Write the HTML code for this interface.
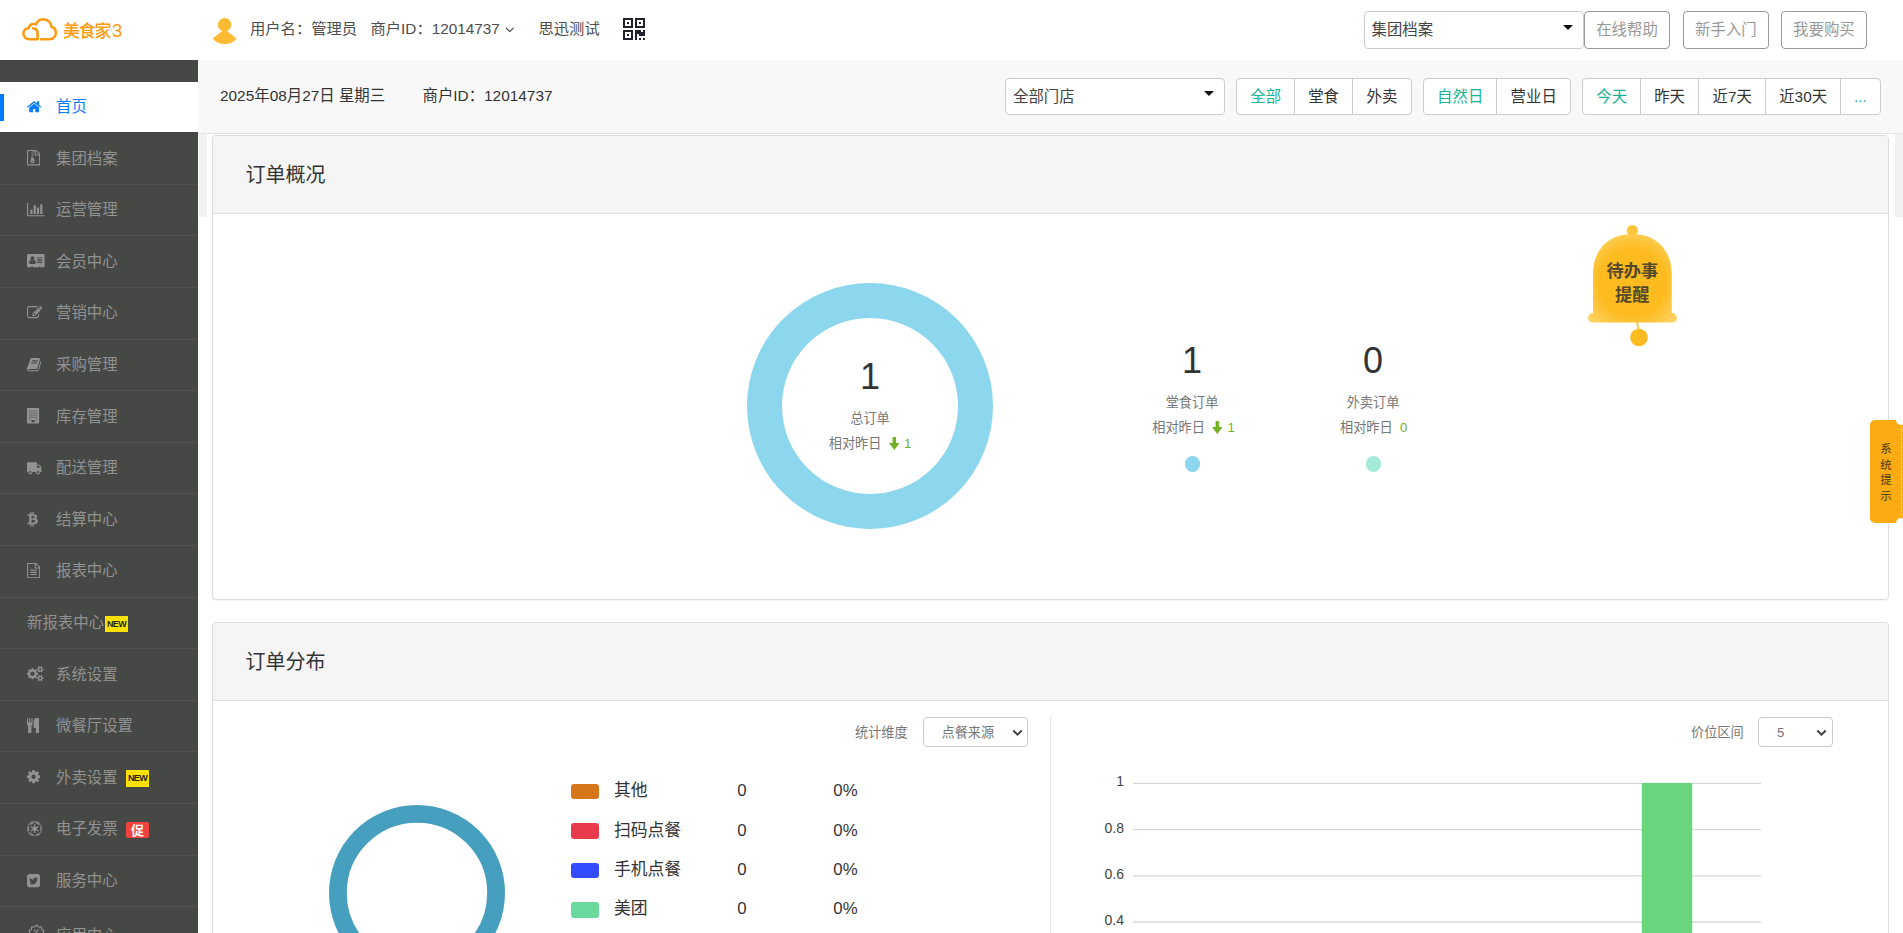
<!DOCTYPE html>
<html lang="zh-CN">
<head>
<meta charset="utf-8">
<title>美食家3</title>
<style>
html,body{margin:0;padding:0;}
body{width:1903px;height:933px;overflow:hidden;background:#fff;position:relative;font-family:"Liberation Sans","Noto Sans CJK SC",sans-serif;color:#333;font-size:15.4px;}
*{box-sizing:border-box;}
.abs{position:absolute;}
svg.fa{display:block;}
/* header */
#hdr{position:absolute;left:0;top:0;width:1903px;height:60px;background:#fff;}
#logo-t{position:absolute;left:63px;top:17.5px;font-size:17px;line-height:26px;color:#ff9a0e;letter-spacing:-1.2px;font-weight:500;white-space:nowrap;}
#logo-t b{font-weight:normal;font-size:18.5px;letter-spacing:0;margin-left:1.5px;}
.ht{position:absolute;top:16px;line-height:26px;font-size:15.3px;color:#4d4d4d;white-space:nowrap;}
.sel{position:absolute;border:1px solid #ccc;border-radius:4px;background:#fff;font-size:15.4px;color:#333;white-space:nowrap;}
.sel .tri{position:absolute;width:0;height:0;border-left:5px solid transparent;border-right:5px solid transparent;border-top:5.5px solid #111;}
.hb{position:absolute;top:11px;height:37.5px;width:85.4px;border:1px solid #999;border-radius:4px;color:#999;font-size:15.4px;line-height:36.8px;text-align:center;background:#fff;white-space:nowrap;}
/* sidebar */
#side{position:absolute;left:0;top:60px;width:198px;height:873px;background:#464845;overflow:hidden;}
#side ul{list-style:none;margin:0;padding:0;position:absolute;left:0;top:22px;width:198px;}
#side li{position:relative;height:51.6px;border-bottom:1px solid #525350;color:#929292;font-size:15.4px;line-height:50.6px;white-space:nowrap;}
#side li.act{height:50px;background:#fff;color:#0a7cff;border-bottom:none;line-height:50px;margin-bottom:1.2px;}
#side li.act:before{content:"";position:absolute;left:0;top:12px;width:4px;height:27px;background:#007bff;}
#side .ico{position:absolute;left:27px;top:17px;width:20px;height:16px;}
#side .lb{position:absolute;left:56px;top:0.5px;}
#side li.noico .lb{left:27px;}
.bnew{position:absolute;left:126px;top:17.6px;height:17.5px;width:23px;background:#ffe100;color:#222;font-size:9px;font-weight:bold;line-height:17.5px;text-align:center;letter-spacing:-0.7px;}
.bnew.b0{left:105px;top:18.6px;height:16px;line-height:16px;}
.bcu{position:absolute;left:126px;top:18px;height:16px;width:23px;background:#f0433d;color:#fff;font-size:13px;font-weight:bold;line-height:17px;text-align:center;border-radius:2px;}
/* filter bar */
#fbar{position:absolute;left:198px;top:60px;width:1705px;height:73.5px;background:#f8f8f8;border-bottom:1px solid #e4e4e4;}
.ft{position:absolute;top:23px;line-height:26px;font-size:15.4px;color:#333;white-space:nowrap;}
.bg{position:absolute;top:18px;height:36.6px;display:flex;border:1px solid #ccc;border-radius:4px;background:#fff;overflow:hidden;}
.bg span{display:block;height:100%;line-height:36px;text-align:center;font-size:15.4px;color:#333;border-left:1px solid #ccc;white-space:nowrap;}
.bg span:first-child{border-left:none;}
.bg span.on{color:#1ab394;}
/* cards */
.strip{position:absolute;top:133.5px;height:83px;background:#f1f1f1;}
.card{position:absolute;left:212px;width:1677px;border:1px solid #ddd;border-radius:4px;background:#fff;box-shadow:0 1px 1px rgba(0,0,0,.05);}
.card .hd{height:78px;background:#f5f5f5;border-bottom:1px solid #ddd;border-radius:3px 3px 0 0;}
.card .hd span{position:absolute;left:32.5px;top:25px;font-size:20px;line-height:28px;color:#333;white-space:nowrap;}
.c{position:absolute;text-align:center;white-space:nowrap;}
.g{color:#777;font-size:13.2px;}
.gr{color:#72b226;margin-right:-3px;}
.lg{font-size:16.8px;line-height:26px;color:#333;white-space:nowrap;}
</style>
</head>
<body>
<div id="hdr">
  <svg class="abs" style="left:20px;top:15px" width="40" height="28" viewBox="0 0 40 28"><path d="M17.5 24.2 H9.6 C5.9 24.2 3.4 21.8 3.4 18.6 C3.4 15.6 5.6 13.4 8.6 13.2 C9.2 10.6 11.2 9 13.8 9 C14.6 9 15.3 9.1 15.9 9.4 C17.2 6.2 20 4.2 23.4 4.2 C27.8 4.2 31.2 7.5 31.4 11.8 C34.2 12.6 35.9 14.9 35.9 17.8 C35.9 21.4 33.2 24.2 29.4 24.2 H21.2" fill="none" stroke="#ff9a0e" stroke-width="2.6" stroke-linecap="round" stroke-linejoin="round"/><path d="M13.2 13.4 C15.8 13.6 17.6 15.6 17.6 18.4 V24" fill="none" stroke="#ff9a0e" stroke-width="2.6" stroke-linecap="round"/></svg>
  <div id="logo-t">美食家<b>3</b></div>
  <svg class="abs" style="left:211px;top:17px" width="28" height="28" viewBox="0 0 28 28"><circle cx="13.6" cy="7.8" r="6.8" fill="#fdbb33"/><path d="M13.6 12.2 L25.6 21.4 C22.6 25.2 18.4 27 13.6 27 C8.8 27 4.6 25.2 1.6 21.4 Z" fill="#fdbb33"/></svg>
  <div class="ht" style="left:250px">用户名：管理员</div>
  <div class="ht" style="left:370.5px">商户ID：12014737</div>
  <div class="abs" style="left:505px;top:21.8px;color:#4d4d4d"><svg class="fa" width="9.643" height="15" viewBox="0 -1536 1152 1792" style=""><path transform="scale(1,-1)" fill="currentColor" d="M1075 800q0 -13 -10 -23l-466 -466q-10 -10 -23 -10t-23 10l-466 466q-10 10 -10 23t10 23l50 50q10 10 23 10t23 -10l393 -393l393 393q10 10 23 10t23 -10l50 -50q10 -10 10 -23z"/></svg></div>
  <div class="ht" style="left:538.5px">思迅测试</div>
  <div class="abs" style="left:623.3px;top:16.4px;color:#22222f"><svg class="fa" width="22.000" height="28" viewBox="0 -1536 1408 1792" style=""><path transform="scale(1,-1)" fill="currentColor" d="M384 384v-128h-128v128h128zM384 1152v-128h-128v128h128zM1152 1152v-128h-128v128h128zM128 129h384v383h-384v-383zM128 896h384v384h-384v-384zM896 896h384v384h-384v-384zM640 640v-640h-640v640h640zM1152 128v-128h-128v128h128zM1408 128v-128h-128v128h128z
M1408 640v-384h-384v128h-128v-384h-128v640h384v-128h128v128h128zM640 1408v-640h-640v640h640zM1408 1408v-640h-640v640h640z"/></svg></div>
  <div class="sel" style="left:1364px;top:11px;width:220px;height:37.5px;line-height:36.5px;padding-left:6.5px;color:#444">集团档案<i class="tri" style="left:198.2px;top:12.8px"></i></div>
  <div class="hb" style="left:1584.3px">在线帮助</div>
  <div class="hb" style="left:1683.2px">新手入门</div>
  <div class="hb" style="left:1781.2px">我要购买</div>
</div>
<div id="side">
<ul>
<li class="mi act"><span class="ico"><svg class="fa" width="14.300" height="15.4" viewBox="0 -1536 1664 1792" style=""><path transform="scale(1,-1)" fill="currentColor" d="M1408 544v-480q0 -26 -19 -45t-45 -19h-384v384h-256v-384h-384q-26 0 -45 19t-19 45v480q0 1 0.5 3t0.5 3l575 474l575 -474q1 -2 1 -6zM1631 613l-62 -74q-8 -9 -21 -11h-3q-13 0 -21 7l-692 577l-692 -577q-12 -8 -24 -7q-13 2 -21 11l-62 74q-8 10 -7 23.5t11 21.5
l719 599q32 26 76 26t76 -26l244 -204v195q0 14 9 23t23 9h192q14 0 23 -9t9 -23v-408l219 -182q10 -8 11 -21.5t-7 -23.5z"/></svg></span><span class="lb" style="top:-0.3px">首页</span></li>
<li class="mi"><span class="ico"><svg class="fa" width="13.200" height="15.4" viewBox="0 -1536 1536 1792" style=""><path transform="scale(1,-1)" fill="currentColor" d="M640 1152v128h-128v-128h128zM768 1024v128h-128v-128h128zM640 896v128h-128v-128h128zM768 768v128h-128v-128h128zM1468 1156q28 -28 48 -76t20 -88v-1152q0 -40 -28 -68t-68 -28h-1344q-40 0 -68 28t-28 68v1600q0 40 28 68t68 28h896q40 0 88 -20t76 -48zM1024 1400
v-376h376q-10 29 -22 41l-313 313q-12 12 -41 22zM1408 -128v1024h-416q-40 0 -68 28t-28 68v416h-128v-128h-128v128h-512v-1536h1280zM781 593l107 -349q8 -27 8 -52q0 -83 -72.5 -137.5t-183.5 -54.5t-183.5 54.5t-72.5 137.5q0 25 8 52q21 63 120 396v128h128v-128h79
q22 0 39 -13t23 -34zM640 128q53 0 90.5 19t37.5 45t-37.5 45t-90.5 19t-90.5 -19t-37.5 -45t37.5 -45t90.5 -19z"/></svg></span><span class="lb">集团档案</span></li>
<li class="mi"><span class="ico"><svg class="fa" width="17.600" height="15.4" viewBox="0 -1536 2048 1792" style=""><path transform="scale(1,-1)" fill="currentColor" d="M640 640v-512h-256v512h256zM1024 1152v-1024h-256v1024h256zM2048 0v-128h-2048v1536h128v-1408h1920zM1408 896v-768h-256v768h256zM1792 1280v-1152h-256v1152h256z"/></svg></span><span class="lb">运营管理</span></li>
<li class="mi"><span class="ico"><svg class="fa" width="17.600" height="15.4" viewBox="0 -1536 2048 1792" style=""><path transform="scale(1,-1)" fill="currentColor" d="M1024 405q0 64 -9 117.5t-29.5 103t-60.5 78t-97 28.5q-6 -4 -30 -18t-37.5 -21.5t-35.5 -17.5t-43 -14.5t-42 -4.5t-42 4.5t-43 14.5t-35.5 17.5t-37.5 21.5t-30 18q-57 0 -97 -28.5t-60.5 -78t-29.5 -103t-9 -117.5t37 -106.5t91 -42.5h512q54 0 91 42.5t37 106.5z
M867 925q0 94 -66.5 160.5t-160.5 66.5t-160.5 -66.5t-66.5 -160.5t66.5 -160.5t160.5 -66.5t160.5 66.5t66.5 160.5zM1792 416v64q0 14 -9 23t-23 9h-576q-14 0 -23 -9t-9 -23v-64q0 -14 9 -23t23 -9h576q14 0 23 9t9 23zM1792 676v56q0 15 -10.5 25.5t-25.5 10.5h-568
q-15 0 -25.5 -10.5t-10.5 -25.5v-56q0 -15 10.5 -25.5t25.5 -10.5h568q15 0 25.5 10.5t10.5 25.5zM1792 928v64q0 14 -9 23t-23 9h-576q-14 0 -23 -9t-9 -23v-64q0 -14 9 -23t23 -9h576q14 0 23 9t9 23zM2048 1248v-1216q0 -66 -47 -113t-113 -47h-352v96q0 14 -9 23t-23 9
h-64q-14 0 -23 -9t-9 -23v-96h-768v96q0 14 -9 23t-23 9h-64q-14 0 -23 -9t-9 -23v-96h-352q-66 0 -113 47t-47 113v1216q0 66 47 113t113 47h1728q66 0 113 -47t47 -113z"/></svg></span><span class="lb">会员中心</span></li>
<li class="mi"><span class="ico"><svg class="fa" width="15.400" height="15.4" viewBox="0 -1536 1792 1792" style=""><path transform="scale(1,-1)" fill="currentColor" d="M888 352l116 116l-152 152l-116 -116v-56h96v-96h56zM1328 1072q-16 16 -33 -1l-350 -350q-17 -17 -1 -33t33 1l350 350q17 17 1 33zM1408 478v-190q0 -119 -84.5 -203.5t-203.5 -84.5h-832q-119 0 -203.5 84.5t-84.5 203.5v832q0 119 84.5 203.5t203.5 84.5h832
q63 0 117 -25q15 -7 18 -23q3 -17 -9 -29l-49 -49q-14 -14 -32 -8q-23 6 -45 6h-832q-66 0 -113 -47t-47 -113v-832q0 -66 47 -113t113 -47h832q66 0 113 47t47 113v126q0 13 9 22l64 64q15 15 35 7t20 -29zM1312 1216l288 -288l-672 -672h-288v288zM1756 1084l-92 -92
l-288 288l92 92q28 28 68 28t68 -28l152 -152q28 -28 28 -68t-28 -68z"/></svg></span><span class="lb">营销中心</span></li>
<li class="mi"><span class="ico"><svg class="fa" width="14.300" height="15.4" viewBox="0 -1536 1664 1792" style=""><path transform="scale(1,-1)" fill="currentColor" d="M1639 1058q40 -57 18 -129l-275 -906q-19 -64 -76.5 -107.5t-122.5 -43.5h-923q-77 0 -148.5 53.5t-99.5 131.5q-24 67 -2 127q0 4 3 27t4 37q1 8 -3 21.5t-3 19.5q2 11 8 21t16.5 23.5t16.5 23.5q23 38 45 91.5t30 91.5q3 10 0.5 30t-0.5 28q3 11 17 28t17 23
q21 36 42 92t25 90q1 9 -2.5 32t0.5 28q4 13 22 30.5t22 22.5q19 26 42.5 84.5t27.5 96.5q1 8 -3 25.5t-2 26.5q2 8 9 18t18 23t17 21q8 12 16.5 30.5t15 35t16 36t19.5 32t26.5 23.5t36 11.5t47.5 -5.5l-1 -3q38 9 51 9h761q74 0 114 -56t18 -130l-274 -906
q-36 -119 -71.5 -153.5t-128.5 -34.5h-869q-27 0 -38 -15q-11 -16 -1 -43q24 -70 144 -70h923q29 0 56 15.5t35 41.5l300 987q7 22 5 57q38 -15 59 -43zM575 1056q-4 -13 2 -22.5t20 -9.5h608q13 0 25.5 9.5t16.5 22.5l21 64q4 13 -2 22.5t-20 9.5h-608q-13 0 -25.5 -9.5
t-16.5 -22.5zM492 800q-4 -13 2 -22.5t20 -9.5h608q13 0 25.5 9.5t16.5 22.5l21 64q4 13 -2 22.5t-20 9.5h-608q-13 0 -25.5 -9.5t-16.5 -22.5z"/></svg></span><span class="lb">采购管理</span></li>
<li class="mi"><span class="ico"><svg class="fa" width="13.200" height="15.4" viewBox="0 -1536 1536 1792" style=""><path transform="scale(1,-1)" fill="currentColor" d="M1344 1536q26 0 45 -19t19 -45v-1664q0 -26 -19 -45t-45 -19h-1280q-26 0 -45 19t-19 45v1664q0 26 19 45t45 19h1280zM512 1248v-64q0 -14 9 -23t23 -9h64q14 0 23 9t9 23v64q0 14 -9 23t-23 9h-64q-14 0 -23 -9t-9 -23zM512 992v-64q0 -14 9 -23t23 -9h64q14 0 23 9
t9 23v64q0 14 -9 23t-23 9h-64q-14 0 -23 -9t-9 -23zM512 736v-64q0 -14 9 -23t23 -9h64q14 0 23 9t9 23v64q0 14 -9 23t-23 9h-64q-14 0 -23 -9t-9 -23zM512 480v-64q0 -14 9 -23t23 -9h64q14 0 23 9t9 23v64q0 14 -9 23t-23 9h-64q-14 0 -23 -9t-9 -23zM384 160v64
q0 14 -9 23t-23 9h-64q-14 0 -23 -9t-9 -23v-64q0 -14 9 -23t23 -9h64q14 0 23 9t9 23zM384 416v64q0 14 -9 23t-23 9h-64q-14 0 -23 -9t-9 -23v-64q0 -14 9 -23t23 -9h64q14 0 23 9t9 23zM384 672v64q0 14 -9 23t-23 9h-64q-14 0 -23 -9t-9 -23v-64q0 -14 9 -23t23 -9h64
q14 0 23 9t9 23zM384 928v64q0 14 -9 23t-23 9h-64q-14 0 -23 -9t-9 -23v-64q0 -14 9 -23t23 -9h64q14 0 23 9t9 23zM384 1184v64q0 14 -9 23t-23 9h-64q-14 0 -23 -9t-9 -23v-64q0 -14 9 -23t23 -9h64q14 0 23 9t9 23zM896 -96v192q0 14 -9 23t-23 9h-320q-14 0 -23 -9
t-9 -23v-192q0 -14 9 -23t23 -9h320q14 0 23 9t9 23zM896 416v64q0 14 -9 23t-23 9h-64q-14 0 -23 -9t-9 -23v-64q0 -14 9 -23t23 -9h64q14 0 23 9t9 23zM896 672v64q0 14 -9 23t-23 9h-64q-14 0 -23 -9t-9 -23v-64q0 -14 9 -23t23 -9h64q14 0 23 9t9 23zM896 928v64
q0 14 -9 23t-23 9h-64q-14 0 -23 -9t-9 -23v-64q0 -14 9 -23t23 -9h64q14 0 23 9t9 23zM896 1184v64q0 14 -9 23t-23 9h-64q-14 0 -23 -9t-9 -23v-64q0 -14 9 -23t23 -9h64q14 0 23 9t9 23zM1152 160v64q0 14 -9 23t-23 9h-64q-14 0 -23 -9t-9 -23v-64q0 -14 9 -23t23 -9h64
q14 0 23 9t9 23zM1152 416v64q0 14 -9 23t-23 9h-64q-14 0 -23 -9t-9 -23v-64q0 -14 9 -23t23 -9h64q14 0 23 9t9 23zM1152 672v64q0 14 -9 23t-23 9h-64q-14 0 -23 -9t-9 -23v-64q0 -14 9 -23t23 -9h64q14 0 23 9t9 23zM1152 928v64q0 14 -9 23t-23 9h-64q-14 0 -23 -9
t-9 -23v-64q0 -14 9 -23t23 -9h64q14 0 23 9t9 23zM1152 1184v64q0 14 -9 23t-23 9h-64q-14 0 -23 -9t-9 -23v-64q0 -14 9 -23t23 -9h64q14 0 23 9t9 23z"/></svg></span><span class="lb">库存管理</span></li>
<li class="mi"><span class="ico"><svg class="fa" width="15.400" height="15.4" viewBox="0 -1536 1792 1792" style=""><path transform="translate(1792,0) scale(-1,-1)" fill="currentColor" d="M640 128q0 52 -38 90t-90 38t-90 -38t-38 -90t38 -90t90 -38t90 38t38 90zM256 640h384v256h-158q-13 0 -22 -9l-195 -195q-9 -9 -9 -22v-30zM1536 128q0 52 -38 90t-90 38t-90 -38t-38 -90t38 -90t90 -38t90 38t38 90zM1792 1216v-1024q0 -15 -4 -26.5t-13.5 -18.5
t-16.5 -11.5t-23.5 -6t-22.5 -2t-25.5 0t-22.5 0.5q0 -106 -75 -181t-181 -75t-181 75t-75 181h-384q0 -106 -75 -181t-181 -75t-181 75t-75 181h-64q-3 0 -22.5 -0.5t-25.5 0t-22.5 2t-23.5 6t-16.5 11.5t-13.5 18.5t-4 26.5q0 26 19 45t45 19v320q0 8 -0.5 35t0 38
t2.5 34.5t6.5 37t14 30.5t22.5 30l198 198q19 19 50.5 32t58.5 13h160v192q0 26 19 45t45 19h1024q26 0 45 -19t19 -45z"/></svg></span><span class="lb">配送管理</span></li>
<li class="mi"><span class="ico"><svg class="fa" width="11.000" height="15.4" viewBox="0 -1536 1280 1792" style=""><path transform="scale(1,-1)" fill="currentColor" d="M1167 896q18 -182 -131 -258q117 -28 175 -103t45 -214q-7 -71 -32.5 -125t-64.5 -89t-97 -58.5t-121.5 -34.5t-145.5 -15v-255h-154v251q-80 0 -122 1v-252h-154v255q-18 0 -54 0.5t-55 0.5h-200l31 183h111q50 0 58 51v402h16q-6 1 -16 1v287q-13 68 -89 68h-111v164
l212 -1q64 0 97 1v252h154v-247q82 2 122 2v245h154v-252q79 -7 140 -22.5t113 -45t82.5 -78t36.5 -114.5zM952 351q0 36 -15 64t-37 46t-57.5 30.5t-65.5 18.5t-74 9t-69 3t-64.5 -1t-47.5 -1v-338q8 0 37 -0.5t48 -0.5t53 1.5t58.5 4t57 8.5t55.5 14t47.5 21t39.5 30
t24.5 40t9.5 51zM881 827q0 33 -12.5 58.5t-30.5 42t-48 28t-55 16.5t-61.5 8t-58 2.5t-54 -1t-39.5 -0.5v-307q5 0 34.5 -0.5t46.5 0t50 2t55 5.5t51.5 11t48.5 18.5t37 27t27 38.5t9 51z"/></svg></span><span class="lb">结算中心</span></li>
<li class="mi"><span class="ico"><svg class="fa" width="13.200" height="15.4" viewBox="0 -1536 1536 1792" style=""><path transform="scale(1,-1)" fill="currentColor" d="M1468 1156q28 -28 48 -76t20 -88v-1152q0 -40 -28 -68t-68 -28h-1344q-40 0 -68 28t-28 68v1600q0 40 28 68t68 28h896q40 0 88 -20t76 -48zM1024 1400v-376h376q-10 29 -22 41l-313 313q-12 12 -41 22zM1408 -128v1024h-416q-40 0 -68 28t-28 68v416h-768v-1536h1280z
M384 736q0 14 9 23t23 9h704q14 0 23 -9t9 -23v-64q0 -14 -9 -23t-23 -9h-704q-14 0 -23 9t-9 23v64zM1120 512q14 0 23 -9t9 -23v-64q0 -14 -9 -23t-23 -9h-704q-14 0 -23 9t-9 23v64q0 14 9 23t23 9h704zM1120 256q14 0 23 -9t9 -23v-64q0 -14 -9 -23t-23 -9h-704
q-14 0 -23 9t-9 23v64q0 14 9 23t23 9h704z"/></svg></span><span class="lb">报表中心</span></li>
<li class="mi noico"><span class="lb">新报表中心</span><span class="bnew b0">NEW</span></li>
<li class="mi"><span class="ico"><svg class="fa" width="16.500" height="15.4" viewBox="0 -1536 1920 1792" style=""><path transform="scale(1,-1)" fill="currentColor" d="M896 640q0 106 -75 181t-181 75t-181 -75t-75 -181t75 -181t181 -75t181 75t75 181zM1664 128q0 52 -38 90t-90 38t-90 -38t-38 -90q0 -53 37.5 -90.5t90.5 -37.5t90.5 37.5t37.5 90.5zM1664 1152q0 52 -38 90t-90 38t-90 -38t-38 -90q0 -53 37.5 -90.5t90.5 -37.5
t90.5 37.5t37.5 90.5zM1280 731v-185q0 -10 -7 -19.5t-16 -10.5l-155 -24q-11 -35 -32 -76q34 -48 90 -115q7 -11 7 -20q0 -12 -7 -19q-23 -30 -82.5 -89.5t-78.5 -59.5q-11 0 -21 7l-115 90q-37 -19 -77 -31q-11 -108 -23 -155q-7 -24 -30 -24h-186q-11 0 -20 7.5t-10 17.5
l-23 153q-34 10 -75 31l-118 -89q-7 -7 -20 -7q-11 0 -21 8q-144 133 -144 160q0 9 7 19q10 14 41 53t47 61q-23 44 -35 82l-152 24q-10 1 -17 9.5t-7 19.5v185q0 10 7 19.5t16 10.5l155 24q11 35 32 76q-34 48 -90 115q-7 11 -7 20q0 12 7 20q22 30 82 89t79 59q11 0 21 -7
l115 -90q34 18 77 32q11 108 23 154q7 24 30 24h186q11 0 20 -7.5t10 -17.5l23 -153q34 -10 75 -31l118 89q8 7 20 7q11 0 21 -8q144 -133 144 -160q0 -8 -7 -19q-12 -16 -42 -54t-45 -60q23 -48 34 -82l152 -23q10 -2 17 -10.5t7 -19.5zM1920 198v-140q0 -16 -149 -31
q-12 -27 -30 -52q51 -113 51 -138q0 -4 -4 -7q-122 -71 -124 -71q-8 0 -46 47t-52 68q-20 -2 -30 -2t-30 2q-14 -21 -52 -68t-46 -47q-2 0 -124 71q-4 3 -4 7q0 25 51 138q-18 25 -30 52q-149 15 -149 31v140q0 16 149 31q13 29 30 52q-51 113 -51 138q0 4 4 7q4 2 35 20
t59 34t30 16q8 0 46 -46.5t52 -67.5q20 2 30 2t30 -2q51 71 92 112l6 2q4 0 124 -70q4 -3 4 -7q0 -25 -51 -138q17 -23 30 -52q149 -15 149 -31zM1920 1222v-140q0 -16 -149 -31q-12 -27 -30 -52q51 -113 51 -138q0 -4 -4 -7q-122 -71 -124 -71q-8 0 -46 47t-52 68
q-20 -2 -30 -2t-30 2q-14 -21 -52 -68t-46 -47q-2 0 -124 71q-4 3 -4 7q0 25 51 138q-18 25 -30 52q-149 15 -149 31v140q0 16 149 31q13 29 30 52q-51 113 -51 138q0 4 4 7q4 2 35 20t59 34t30 16q8 0 46 -46.5t52 -67.5q20 2 30 2t30 -2q51 71 92 112l6 2q4 0 124 -70
q4 -3 4 -7q0 -25 -51 -138q17 -23 30 -52q149 -15 149 -31z"/></svg></span><span class="lb">系统设置</span></li>
<li class="mi"><span class="ico"><svg class="fa" width="12.100" height="15.4" viewBox="0 -1536 1408 1792" style=""><path transform="scale(1,-1)" fill="currentColor" d="M640 1472v-640q0 -61 -35.5 -111t-92.5 -70v-779q0 -52 -38 -90t-90 -38h-128q-52 0 -90 38t-38 90v779q-57 20 -92.5 70t-35.5 111v640q0 26 19 45t45 19t45 -19t19 -45v-416q0 -26 19 -45t45 -19t45 19t19 45v416q0 26 19 45t45 19t45 -19t19 -45v-416q0 -26 19 -45
t45 -19t45 19t19 45v416q0 26 19 45t45 19t45 -19t19 -45zM1408 1472v-1600q0 -52 -38 -90t-90 -38h-128q-52 0 -90 38t-38 90v512h-224q-13 0 -22.5 9.5t-9.5 22.5v800q0 132 94 226t226 94h256q26 0 45 -19t19 -45z"/></svg></span><span class="lb">微餐厅设置</span></li>
<li class="mi"><span class="ico"><svg class="fa" width="13.200" height="15.4" viewBox="0 -1536 1536 1792" style=""><path transform="scale(1,-1)" fill="currentColor" d="M1024 640q0 106 -75 181t-181 75t-181 -75t-75 -181t75 -181t181 -75t181 75t75 181zM1536 749v-222q0 -12 -8 -23t-20 -13l-185 -28q-19 -54 -39 -91q35 -50 107 -138q10 -12 10 -25t-9 -23q-27 -37 -99 -108t-94 -71q-12 0 -26 9l-138 108q-44 -23 -91 -38
q-16 -136 -29 -186q-7 -28 -36 -28h-222q-14 0 -24.5 8.5t-11.5 21.5l-28 184q-49 16 -90 37l-141 -107q-10 -9 -25 -9q-14 0 -25 11q-126 114 -165 168q-7 10 -7 23q0 12 8 23q15 21 51 66.5t54 70.5q-27 50 -41 99l-183 27q-13 2 -21 12.5t-8 23.5v222q0 12 8 23t19 13
l186 28q14 46 39 92q-40 57 -107 138q-10 12 -10 24q0 10 9 23q26 36 98.5 107.5t94.5 71.5q13 0 26 -10l138 -107q44 23 91 38q16 136 29 186q7 28 36 28h222q14 0 24.5 -8.5t11.5 -21.5l28 -184q49 -16 90 -37l142 107q9 9 24 9q13 0 25 -10q129 -119 165 -170q7 -8 7 -22
q0 -12 -8 -23q-15 -21 -51 -66.5t-54 -70.5q26 -50 41 -98l183 -28q13 -2 21 -12.5t8 -23.5z"/></svg></span><span class="lb">外卖设置</span><span class="bnew">NEW</span></li>
<li class="mi"><span class="ico"><svg class="fa" width="15.400" height="15.4" viewBox="0 -1536 1792 1792" style=""><path transform="scale(1,-1)" fill="currentColor" d="M874 -102v-66q-208 6 -385 109.5t-283 275.5l58 34q29 -49 73 -99l65 57q148 -168 368 -212l-17 -86q65 -12 121 -13zM276 428l-83 -28q22 -60 49 -112l-57 -33q-98 180 -98 385t98 385l57 -33q-30 -56 -49 -112l82 -28q-35 -100 -35 -212q0 -109 36 -212zM1528 251
l58 -34q-106 -172 -283 -275.5t-385 -109.5v66q56 1 121 13l-17 86q220 44 368 212l65 -57q44 50 73 99zM1377 805l-233 -80q14 -42 14 -85t-14 -85l232 -80q-31 -92 -98 -169l-185 162q-57 -67 -147 -85l48 -241q-52 -10 -98 -10t-98 10l48 241q-90 18 -147 85l-185 -162
q-67 77 -98 169l232 80q-14 42 -14 85t14 85l-233 80q33 93 99 169l185 -162q59 68 147 86l-48 240q44 10 98 10t98 -10l-48 -240q88 -18 147 -86l185 162q66 -76 99 -169zM874 1448v-66q-65 -2 -121 -13l17 -86q-220 -42 -368 -211l-65 56q-38 -42 -73 -98l-57 33
q106 172 282 275.5t385 109.5zM1705 640q0 -205 -98 -385l-57 33q27 52 49 112l-83 28q36 103 36 212q0 112 -35 212l82 28q-19 56 -49 112l57 33q98 -180 98 -385zM1585 1063l-57 -33q-35 56 -73 98l-65 -56q-148 169 -368 211l17 86q-56 11 -121 13v66q209 -6 385 -109.5
t282 -275.5zM1748 640q0 173 -67.5 331t-181.5 272t-272 181.5t-331 67.5t-331 -67.5t-272 -181.5t-181.5 -272t-67.5 -331t67.5 -331t181.5 -272t272 -181.5t331 -67.5t331 67.5t272 181.5t181.5 272t67.5 331zM1792 640q0 -182 -71 -348t-191 -286t-286 -191t-348 -71
t-348 71t-286 191t-191 286t-71 348t71 348t191 286t286 191t348 71t348 -71t286 -191t191 -286t71 -348z"/></svg></span><span class="lb">电子发票</span><span class="bcu">促</span></li>
<li class="mi"><span class="ico"><svg class="fa" width="13.200" height="15.4" viewBox="0 -1536 1536 1792" style=""><path transform="scale(1,-1)" fill="currentColor" d="M1280 926q-56 -25 -121 -34q68 40 93 117q-65 -38 -134 -51q-61 66 -153 66q-87 0 -148.5 -61.5t-61.5 -148.5q0 -29 5 -48q-129 7 -242 65t-192 155q-29 -50 -29 -106q0 -114 91 -175q-47 1 -100 26v-2q0 -75 50 -133.5t123 -72.5q-29 -8 -51 -8q-13 0 -39 4
q21 -63 74.5 -104t121.5 -42q-116 -90 -261 -90q-26 0 -50 3q148 -94 322 -94q112 0 210 35.5t168 95t120.5 137t75 162t24.5 168.5q0 18 -1 27q63 45 105 109zM1536 1120v-960q0 -119 -84.5 -203.5t-203.5 -84.5h-960q-119 0 -203.5 84.5t-84.5 203.5v960q0 119 84.5 203.5
t203.5 84.5h960q119 0 203.5 -84.5t84.5 -203.5z"/></svg></span><span class="lb">服务中心</span></li>
<li class="mi"><span class="ico" style="left:28px"><svg class="fa" width="17" height="16" viewBox="0 0 17 16"><path d="M8.5 1 L10.5 3 L13.2 2.8 L13.8 5.5 L16 7 L14.8 9.5 L15.5 12 L13 13 L11.8 15 L8.5 14.3 L5.2 15 L4 13 L1.5 12 L2.2 9.5 L1 7 L3.2 5.5 L3.8 2.8 L6.5 3 Z" fill="none" stroke="currentColor" stroke-width="1.2"/><circle cx="6.8" cy="6.5" r="0.9" fill="currentColor"/><path d="M10.5 5.5 L6.5 11" stroke="currentColor" stroke-width="1.2"/></svg></span><span class="lb" style="top:3.5px">应用中心</span></li>
</ul>
</div>
<div id="fbar">
  <div class="ft" style="left:22px">2025年08月27日 星期三</div>
  <div class="ft" style="left:224.5px">商户ID：12014737</div>
  <div class="sel" style="left:807px;top:18px;width:220px;height:36.6px;line-height:36px;padding-left:7px;color:#444">全部门店<i class="tri" style="left:198.3px;top:11.9px"></i></div>
  <div class="bg" style="left:1038.3px;width:175.6px"><span class="on" style="width:56.8px">全部</span><span style="width:57.9px">堂食</span><span style="flex:1">外卖</span></div>
  <div class="bg" style="left:1225.2px;width:148px"><span class="on" style="width:72px">自然日</span><span style="flex:1">营业日</span></div>
  <div class="bg" style="left:1384.2px;width:298.5px"><span class="on" style="width:56.9px">今天</span><span style="width:58.1px">昨天</span><span style="width:67px">近7天</span><span style="width:75px">近30天</span><span class="on" style="flex:1">...</span></div>
</div>
<div class="strip" style="left:199px;width:7.6px"></div>
<div class="strip" style="left:1894.5px;width:9px"></div>

<div class="card" id="c1" style="top:135px;height:465px;">
  <div class="hd"><span>订单概况</span></div>
</div>
<svg class="abs" style="left:740px;top:276px" width="260" height="260" viewBox="0 0 260 260"><circle cx="130" cy="130" r="105.5" fill="none" stroke="#8dd7ee" stroke-width="35"/></svg>
<div class="c" style="left:770px;width:200px;top:355px;font-size:36px;line-height:44px;color:#333">1</div>
<div class="c g" style="left:770px;width:200px;top:409.2px;line-height:20px">总订单</div>
<div class="c g" style="left:768.5px;width:200px;top:433.8px;line-height:20px">相对昨日 <span class="gr"><svg width="10.6" height="13" viewBox="0 0 10.6 13" style="display:inline-block;vertical-align:-2.2px;margin:0 1.1px 0 3.4px"><path d="M3.6 0 H7.1 V6 H10.6 L5.3 13 L0 6 H3.6 Z" fill="#72b226"/></svg> 1</span></div>

<div class="c" style="left:1092px;width:200px;top:339px;font-size:36px;line-height:44px;color:#333">1</div>
<div class="c g" style="left:1092px;width:200px;top:393.2px;line-height:20px">堂食订单</div>
<div class="c g" style="left:1092px;width:200px;top:417.8px;line-height:20px">相对昨日 <span class="gr"><svg width="10.6" height="13" viewBox="0 0 10.6 13" style="display:inline-block;vertical-align:-2.2px;margin:0 1.1px 0 3.4px"><path d="M3.6 0 H7.1 V6 H10.6 L5.3 13 L0 6 H3.6 Z" fill="#72b226"/></svg> 1</span></div>
<div class="abs" style="left:1184.8px;top:456.2px;width:15.6px;height:15.7px;border-radius:50%;background:#8dd7ee"></div>

<div class="c" style="left:1273px;width:200px;top:339px;font-size:36px;line-height:44px;color:#333">0</div>
<div class="c g" style="left:1273px;width:200px;top:393.2px;line-height:20px">外卖订单</div>
<div class="c g" style="left:1272.2px;width:200px;top:417.8px;line-height:20px">相对昨日 <span class="gr">&nbsp;0</span></div>
<div class="abs" style="left:1365.7px;top:456.2px;width:15.6px;height:15.7px;border-radius:50%;background:#a3ead9"></div>

<!-- bell -->
<svg class="abs" style="left:1580px;top:220px" width="104" height="134" viewBox="0 0 104 134">
  <defs>
    <linearGradient id="bg1" x1="0" y1="0" x2="0" y2="1"><stop offset="0" stop-color="#fecb45"/><stop offset="0.5" stop-color="#fdbd25"/><stop offset="1" stop-color="#fdb715"/></linearGradient>
    <radialGradient id="bg2" cx="0.5" cy="0.55" r="0.62"><stop offset="0.6" stop-color="#fdbb1f" stop-opacity="1"/><stop offset="1" stop-color="#fed261" stop-opacity="1"/></radialGradient>
  </defs>
  <circle cx="52.3" cy="10.5" r="5.6" fill="#fec63c"/>
  <path d="M13 93 V54 C13 30 28 14 52.3 14 C76.5 14 91.7 30 91.7 54 V93 C94.5 93 97 95.3 97 98 C97 100.6 95 102.5 92.5 102.5 H12.5 C10 102.5 8 100.6 8 98 C8 95.3 10.3 93 13 93 Z" fill="url(#bg2)"/>
  <path d="M57 102 L58.6 110" stroke="#fdbd25" stroke-width="1.6"/>
  <circle cx="59" cy="117.5" r="8.8" fill="#fdbb22"/>
  <text x="52.3" y="56.6" text-anchor="middle" font-family="Liberation Sans, Noto Sans CJK SC, sans-serif" font-weight="bold" font-size="17.2" fill="#54482a">待办事</text>
  <text x="52.3" y="80.6" text-anchor="middle" font-family="Liberation Sans, Noto Sans CJK SC, sans-serif" font-weight="bold" font-size="17.2" fill="#54482a">提醒</text>
</svg>

<!-- system tip tab -->
<div class="abs" style="left:1870px;top:420px;width:33px;height:103px;background:#fdab12;border-radius:5px 0 0 5px;overflow:hidden">
  <div class="abs" style="left:31px;top:7px;width:0;height:89px;border-left:1.5px dotted #fff2cf"></div>
  <div class="abs" style="left:26px;top:-5px;width:10px;height:10px;border-radius:50%;background:#fff"></div>
  <div class="abs" style="left:26px;top:98px;width:10px;height:10px;border-radius:50%;background:#fff"></div>
  <div class="abs" style="left:9px;top:22px;width:14px;font-size:11.5px;line-height:15.5px;color:#4f3a10;text-align:center">系<br>统<br>提<br>示</div>
</div>

<div class="card" id="c2" style="top:622px;height:330px;border-radius:4px 4px 0 0">
  <div class="hd"><span>订单分布</span></div>
</div>
<div class="abs g" style="left:855px;top:723px;line-height:20px;white-space:nowrap">统计维度</div>
<div class="sel" style="left:923px;top:717px;width:105px;height:30px;line-height:29.6px;padding-left:17.5px;font-size:13.2px;color:#777">点餐来源<svg class="abs" style="left:88px;top:11px" width="11" height="8" viewBox="0 0 11 8"><path d="M1.3 1.5 L5.5 5.7 L9.7 1.5" fill="none" stroke="#444" stroke-width="2"/></svg></div>
<svg class="abs" style="left:320px;top:800px" width="200" height="140" viewBox="0 0 200 140"><circle cx="97" cy="93" r="79.1" fill="none" stroke="#479fc0" stroke-width="17.8"/></svg>
<div class="abs" style="left:570.8px;top:783.5px;width:27.8px;height:15.6px;border-radius:3px;background:#d5761b"></div><div class="abs lg" style="left:614px;top:777.5px">其他</div><div class="abs lg" style="left:737.3px;top:777.5px">0</div><div class="abs lg" style="left:833.3px;top:777.5px">0%</div>
<div class="abs" style="left:570.8px;top:823px;width:27.8px;height:15.6px;border-radius:3px;background:#e83a4b"></div><div class="abs lg" style="left:614px;top:817.9px">扫码点餐</div><div class="abs lg" style="left:737.3px;top:817.9px">0</div><div class="abs lg" style="left:833.3px;top:817.9px">0%</div>
<div class="abs" style="left:570.8px;top:862.7px;width:27.8px;height:15.6px;border-radius:3px;background:#334bff"></div><div class="abs lg" style="left:614px;top:857.3px">手机点餐</div><div class="abs lg" style="left:737.3px;top:857.3px">0</div><div class="abs lg" style="left:833.3px;top:857.3px">0%</div>
<div class="abs" style="left:570.8px;top:902.3px;width:27.8px;height:15.6px;border-radius:3px;background:#6bd99e"></div><div class="abs lg" style="left:614px;top:896.4px">美团</div><div class="abs lg" style="left:737.3px;top:896.4px">0</div><div class="abs lg" style="left:833.3px;top:896.4px">0%</div>
<div class="abs" style="left:1050px;top:717px;width:1px;height:216px;background:#e7e7e7"></div>
<div class="abs g" style="left:1691px;top:723px;line-height:20px;white-space:nowrap">价位区间</div>
<div class="sel" style="left:1758.4px;top:717px;width:74.4px;height:30px;line-height:29.6px;padding-left:17.5px;font-size:13.2px;color:#777">5<svg class="abs" style="left:57px;top:11px" width="11" height="8" viewBox="0 0 11 8"><path d="M1.3 1.5 L5.5 5.7 L9.7 1.5" fill="none" stroke="#444" stroke-width="2"/></svg></div>
<svg class="abs" style="left:1090px;top:760px" width="700" height="173" viewBox="0 0 700 173">
  <g stroke="#d9d9d9" stroke-width="1.3">
    <line x1="43" y1="23.4" x2="671" y2="23.4"/><line x1="43" y1="69.6" x2="671" y2="69.6"/><line x1="43" y1="115.8" x2="671" y2="115.8"/><line x1="43" y1="162" x2="671" y2="162"/>
  </g>
  <rect x="551.8" y="23" width="50.4" height="150" fill="#69d67e"/>
  <g font-family="Liberation Sans, sans-serif" font-size="14" fill="#444" text-anchor="end">
    <text x="34" y="26">1</text><text x="34" y="72.6">0.8</text><text x="34" y="118.8">0.6</text><text x="34" y="165">0.4</text>
  </g>
</svg>
</body>
</html>
